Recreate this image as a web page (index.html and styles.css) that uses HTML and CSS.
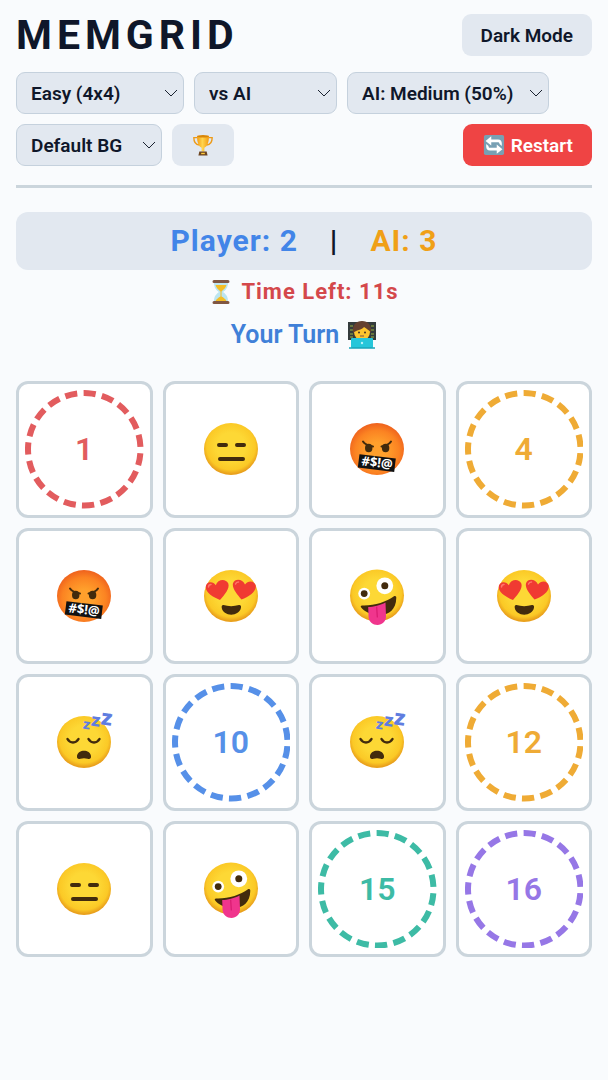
FILE: index.html
```html
<!DOCTYPE html>
<html lang="en">
<head>
<meta charset="utf-8">
<meta name="viewport" content="width=device-width, initial-scale=1">
<title>MemGrid</title>
<link rel="stylesheet" href="styles.css">
</head>
<body>
<svg class="sprites" aria-hidden="true">
  <defs>
    <radialGradient id="yellow" cx="50%" cy="45%" r="53%"><stop offset="0.5" stop-color="#fdd835"/><stop offset="0.85" stop-color="#fbc926"/><stop offset="1" stop-color="#e9a01c"/></radialGradient>
    <radialGradient id="orange" cx="50%" cy="55%" r="58%"><stop offset="0.3" stop-color="#ffa02c"/><stop offset="0.7" stop-color="#fb8322"/><stop offset="1" stop-color="#ec5a1c"/></radialGradient>
    <linearGradient id="gold" x1="0" x2="1"><stop offset="0" stop-color="#f39c12"/><stop offset="0.45" stop-color="#ffd54f"/><stop offset="1" stop-color="#f29a10"/></linearGradient>
  </defs>
  <symbol id="dashes" viewBox="0 0 118 118">
    <circle cx="59" cy="59" r="56" pathLength="190" stroke-dasharray="6.600 3.400" transform="rotate(4 59 59)" fill="none" stroke="currentColor" stroke-width="6"/>
  </symbol>
  <symbol id="flat" viewBox="0 0 60 60">
    <ellipse cx="30" cy="30" rx="27" ry="26" fill="url(#yellow)"/>
    <path d="M18 26h7M36 26h7M19 40h23" fill="none" stroke="#422b0d" stroke-width="4" stroke-linecap="round"/>
  </symbol>
  <symbol id="angry" viewBox="0 0 60 60">
    <ellipse cx="30" cy="30" rx="27" ry="26" fill="url(#orange)"/>
    <ellipse cx="21.7" cy="29" rx="3.7" ry="4.3" fill="#422b0d"/><ellipse cx="38.6" cy="29" rx="3.7" ry="4.3" fill="#422b0d"/>
    <path d="M16 22.5Q18 26 26 27.5M34.500 27.500Q42 26 44 22.500" fill="none" stroke="#422b0d" stroke-width="2" stroke-linecap="round"/>
    <path d="M12.500 35.300L48.800 39.600 47.200 53 10.800 48.600z" fill="#111"/>
    <text x="30" y="48" transform="rotate(6.800 30 44)" text-anchor="middle" class="curse">#$!@</text>
  </symbol>
  <symbol id="hearts" viewBox="0 0 60 60">
    <ellipse cx="30" cy="30" rx="27" ry="26" fill="url(#yellow)"/>
    <path d="M19 34C12 31 5 27 4.800 21.500 4.600 15.500 12 14.500 14.800 19.200 16.500 13 25 12 27.300 17.600 29 22.500 23.500 29 19 34z" fill="#f03a32"/>
    <path d="M40.500 33.500C36 28.500 30.700 22 32 17.300 33.800 11.800 42 13 44 18.500 47 14 54 14.500 54.800 20 55.300 26 47.500 31 40.500 33.500z" fill="#f03a32"/>
    <path d="M7.500 21c0-1.500 1-2.500 2.500-2.500M34.500 18c.5-1.500 1.500-2 3-2" stroke="#ff7569" stroke-width="1.500" fill="none" stroke-linecap="round"/>
    <path d="M22.500 39C27 40.500 33 40.500 38 39c1.500-.3 2.300 1 2 2.500-1.300 9.500-18.300 9.500-19.300 0-.2-1.500.5-2.800 1.800-2.500z" fill="#422b0d"/>
  </symbol>
  <symbol id="zany" viewBox="0 0 60 60">
    <ellipse cx="30" cy="29.500" rx="27" ry="26" fill="url(#yellow)"/>
    <circle cx="17.200" cy="27.600" r="5.900" fill="#fff"/><circle cx="17.200" cy="27.600" r="3.400" fill="#422b0d"/>
    <circle cx="37.800" cy="19.800" r="8.400" fill="#fff"/><circle cx="37.800" cy="19.800" r="3.500" fill="#422b0d"/>
    <path d="M15 39.500C27 40 39 36 47 30.300c1.400-.9 2.300 0 2.300 1.500-.2 12-7.500 16.700-15.300 17-9 .3-17-2.800-20-7.500-.6-1 0-1.800 1-1.800z" fill="#422b0d"/>
    <path d="M21.200 41C26 41 34 39 38.500 36.500L39 50c.2 5.500-4 9-8.500 9S21.600 56 21.500 50z" fill="#f0358d"/>
    <path d="M29.700 41l.6 10" stroke="#d81b70" stroke-width="1.200" stroke-linecap="round"/>
  </symbol>
  <symbol id="sleep" viewBox="0 0 60 60">
    <ellipse cx="30" cy="30" rx="27" ry="26" fill="url(#yellow)"/>
    <path d="M13.500 27c2.500 4.500 8.500 4.500 11 0M34.500 27c2.500 4.500 8.500 4.500 11 0" fill="none" stroke="#422b0d" stroke-width="2.500" stroke-linecap="round"/>
    <path d="M23 44c1-7 13-7 14 0 .3 3-1.500 3.300-3.500 2.700-2.300-.7-4.700-.7-7 0-2 .6-3.800.3-3.500-2.700z" fill="#422b0d"/>
    <g class="zzz"><text x="29" y="17" font-size="14" transform="rotate(8 32 14)">z</text><text x="37" y="14" font-size="18" transform="rotate(8 41 10)">z</text><text x="47" y="13" font-size="22" transform="rotate(8 52 8)">z</text></g>
  </symbol>
</svg>

<main class="page">
  <header class="header">
    <div class="topbar">
      <h1 class="title">MEMGRID</h1>
      <button class="btn" type="button">Dark Mode</button>
    </div>
    <div class="controls">
      <div class="picker picker-size"><select class="select" aria-label="Grid size"><option>Easy (4x4)</option></select><svg class="chevron" viewBox="0 0 14 8"><path d="M1 1l6 6 6-6"/></svg></div>
      <div class="picker picker-mode"><select class="select" aria-label="Game mode"><option>vs AI</option></select><svg class="chevron" viewBox="0 0 14 8"><path d="M1 1l6 6 6-6"/></svg></div>
      <div class="picker picker-level"><select class="select" aria-label="AI level"><option>AI: Medium (50%)</option></select><svg class="chevron" viewBox="0 0 14 8"><path d="M1 1l6 6 6-6"/></svg></div>
      <div class="picker picker-theme"><select class="select" aria-label="Background"><option>Default BG</option></select><svg class="chevron" viewBox="0 0 14 8"><path d="M1 1l6 6 6-6"/></svg></div>
      <button class="btn" type="button" aria-label="High scores">
        <svg class="icon-small" viewBox="0 0 24 24"><path d="M6 4H2c0 4 1.500 7.500 6 8M18 4h4c0 4-1.500 7.500-6 8" fill="none" stroke="#ed9a17" stroke-width="1.500"/><path d="M5.500 2h13c0 7-1.500 11.500-5 13v4h-3v-4C7 13.500 5.500 9 5.500 2z" fill="url(#gold)"/><ellipse cx="12" cy="2.500" rx="6.500" ry="1.300" fill="#d98508"/><path d="M8 19h8l1 4.500H7z" fill="#6d4520"/><path d="M10 20.500h4v1.500h-4z" fill="#ffca3a"/></svg>
      </button>
      <button class="btn btn-restart" type="button">
        <svg class="icon-small" viewBox="0 0 24 24"><rect x="1" y="1" width="22" height="22" rx="2" fill="#78a0b4"/><path d="M20.500 13V10c0-2.500-1.500-4-4-4H9V2.500L2.800 7.500 9 12.500V9h7c1.500 0 2 .6 2 2zM3.500 11v3c0 2.500 1.500 4 4 4H15v3.500l6.200-5L15 11.500V15H8c-1.500 0-2-.6-2-2z" fill="#fff"/></svg>
        Restart
      </button>
    </div>
  </header>

  <section class="score"><span class="player">Player: 2</span><span>|</span><span class="ai">AI: 3</span></section>
  <p class="timer">
    <svg class="icon-timer" viewBox="0 0 24 26"><path d="M5 3h14c0 5-1 7-5 10 4 3 5 5 5 10H5c0-5 1-7 5-10C6 10 5 8 5 3z" fill="#bce5f0"/><path d="M6.500 6h11c-.8 3-3 4.500-5 6.500v5c2 1 4 2.500 5 4.500h-11c1-2 3-3.500 5-4.500v-5C9.500 10.500 7.300 9 6.500 6z" fill="#f4bd25"/><path d="M5 2.500h14M5 23.500h14" stroke="#805642" stroke-width="3" stroke-linecap="round"/></svg>
    Time Left: 11s
  </p>
  <p class="turn">
    Your Turn
    <svg class="icon-turn" viewBox="0 0 30 28"><path d="M1 1h28v18H1z" fill="#343b3c"/><path d="M3 5h3M3 9h4M3 13h3M24 5h3M23 9h4M24 13h3M3 16h3M24 16h3" stroke="#9bb33e" stroke-width="1.200"/><path d="M5 27c0-7 4-9 10-9s10 2 10 9z" fill="#ffb300"/><ellipse cx="15" cy="11" rx="8" ry="8.500" fill="#fdc52f"/><path d="M6 12C5 4 9 0 15 0s10 4 9 12c-1.500-3-4.500-4-7-6-2 3-8 3-11 6z" fill="#65402f"/><circle cx="12" cy="11.500" r="1" fill="#423022"/><circle cx="18" cy="11.500" r="1" fill="#423022"/><path d="M13 15h4" stroke="#795548" stroke-width="1"/><rect x="4" y="17" width="22" height="10" rx="1" fill="#26c6da"/><path d="M2 27h26" stroke="#18a5b8" stroke-width="1.500"/><circle cx="15" cy="22" r="1.200" fill="#b8f2f7"/></svg>
  </p>

  <section class="grid" aria-label="Cards">
    <button class="card red" type="button"><svg class="ring"><use href="#dashes"/></svg><span>1</span></button>
    <button class="card" type="button" aria-label="Neutral"><svg class="face"><use href="#flat"/></svg></button>
    <button class="card" type="button" aria-label="Angry"><svg class="face"><use href="#angry"/></svg></button>
    <button class="card amber" type="button"><svg class="ring"><use href="#dashes"/></svg><span>4</span></button>
    <button class="card" type="button" aria-label="Angry"><svg class="face"><use href="#angry"/></svg></button>
    <button class="card" type="button" aria-label="Heart eyes"><svg class="face"><use href="#hearts"/></svg></button>
    <button class="card" type="button" aria-label="Zany"><svg class="face"><use href="#zany"/></svg></button>
    <button class="card" type="button" aria-label="Heart eyes"><svg class="face"><use href="#hearts"/></svg></button>
    <button class="card" type="button" aria-label="Sleeping"><svg class="face"><use href="#sleep"/></svg></button>
    <button class="card blue" type="button"><svg class="ring"><use href="#dashes"/></svg><span>10</span></button>
    <button class="card" type="button" aria-label="Sleeping"><svg class="face"><use href="#sleep"/></svg></button>
    <button class="card amber" type="button"><svg class="ring"><use href="#dashes"/></svg><span>12</span></button>
    <button class="card" type="button" aria-label="Neutral"><svg class="face"><use href="#flat"/></svg></button>
    <button class="card" type="button" aria-label="Zany"><svg class="face"><use href="#zany"/></svg></button>
    <button class="card teal" type="button"><svg class="ring"><use href="#dashes"/></svg><span>15</span></button>
    <button class="card purple" type="button"><svg class="ring"><use href="#dashes"/></svg><span>16</span></button>
  </section>
</main>
</body>
</html>
```
FILE: styles.css
```css
* { box-sizing: border-box; }
body { margin: 0; min-height: 100vh; background: #f9fbfd; color: #0f172a; font-family: Roboto, sans-serif; }
.sprites { position: absolute; width: 0; height: 0; overflow: visible; }
symbol { overflow: visible; }
.page { padding: 14px 16px; display: flex; flex-direction: column; }
.header { display: flex; flex-direction: column; gap: 16px; padding-bottom: 19px; border-bottom: 3px solid #cbd5dc; }
.topbar { display: flex; justify-content: space-between; align-items: center; }
.title { margin: 0; font-size: 41px; line-height: 42px; font-weight: 700; letter-spacing: 5px; }
.controls { display: flex; flex-wrap: wrap; gap: 10px; }
.btn { height: 42px; padding: 0 19px; border: 0; border-radius: 9px; background: #e2e8f0; color: inherit; font: 600 19px Roboto, sans-serif; display: flex; align-items: center; gap: 5px; }
.btn-restart { margin-left: auto; background: #ef4444; color: #fff; }
.icon-small { width: 24px; height: 22px; }
.picker { display: grid; align-items: center; }
.picker > * { grid-area: 1 / 1; }
.picker-size { width: 168px; }
.picker-mode { width: 143px; }
.picker-level { width: 202px; }
.picker-theme { width: 146px; }
.select { appearance: none; width: 100%; height: 42px; padding: 0 14px; border: 1px solid #c5d1dd; border-radius: 9px; background: #e2e8f0; color: inherit; font: 600 19px Roboto, sans-serif; }
.chevron { justify-self: end; width: 14px; height: 8px; margin-right: 6px; fill: none; stroke: #1a2230; stroke-width: 1; pointer-events: none; }
.score { margin-top: 24px; height: 58px; border-radius: 12px; background: #e2e8f0; display: flex; align-items: center; justify-content: center; gap: 32px; font-size: 30px; line-height: 34px; font-weight: 700; letter-spacing: 1px; }
.player { color: #4285e8; }
.ai { color: #f0a017; }
.timer { margin: 8px 0 0; display: flex; align-items: center; justify-content: center; gap: 8px; font-size: 22px; line-height: 28px; font-weight: 700; letter-spacing: 1px; color: #d4484b; }
.icon-timer { width: 24px; height: 26px; }
.turn { margin: 13px 0 0; display: flex; align-items: center; justify-content: center; gap: 8px; font-size: 25px; line-height: 32px; font-weight: 600; color: #4080d8; }
.icon-turn { width: 30px; height: 28px; }
.grid { margin-top: 30px; display: grid; grid-template-columns: repeat(4, 1fr); gap: 10px; }
.card { aspect-ratio: 1; padding: 6px; border: 3px solid #cbd5dc; border-radius: 12px; background: #fff; display: grid; place-items: center; font: 600 32px Roboto, sans-serif; }
.card > * { grid-area: 1 / 1; }
.ring { width: 100%; height: 100%; }
.red { color: #e25c5e; }
.amber { color: #efab35; }
.blue { color: #5690e8; }
.teal { color: #3dbba5; }
.purple { color: #9677e6; }
.face { width: 60px; height: 60px; overflow: visible; }
.curse { font: 700 13px "Noto Sans", sans-serif; fill: #fff; }
.zzz { font-family: Roboto, sans-serif; font-weight: 900; fill: #5f7de0; }
```
